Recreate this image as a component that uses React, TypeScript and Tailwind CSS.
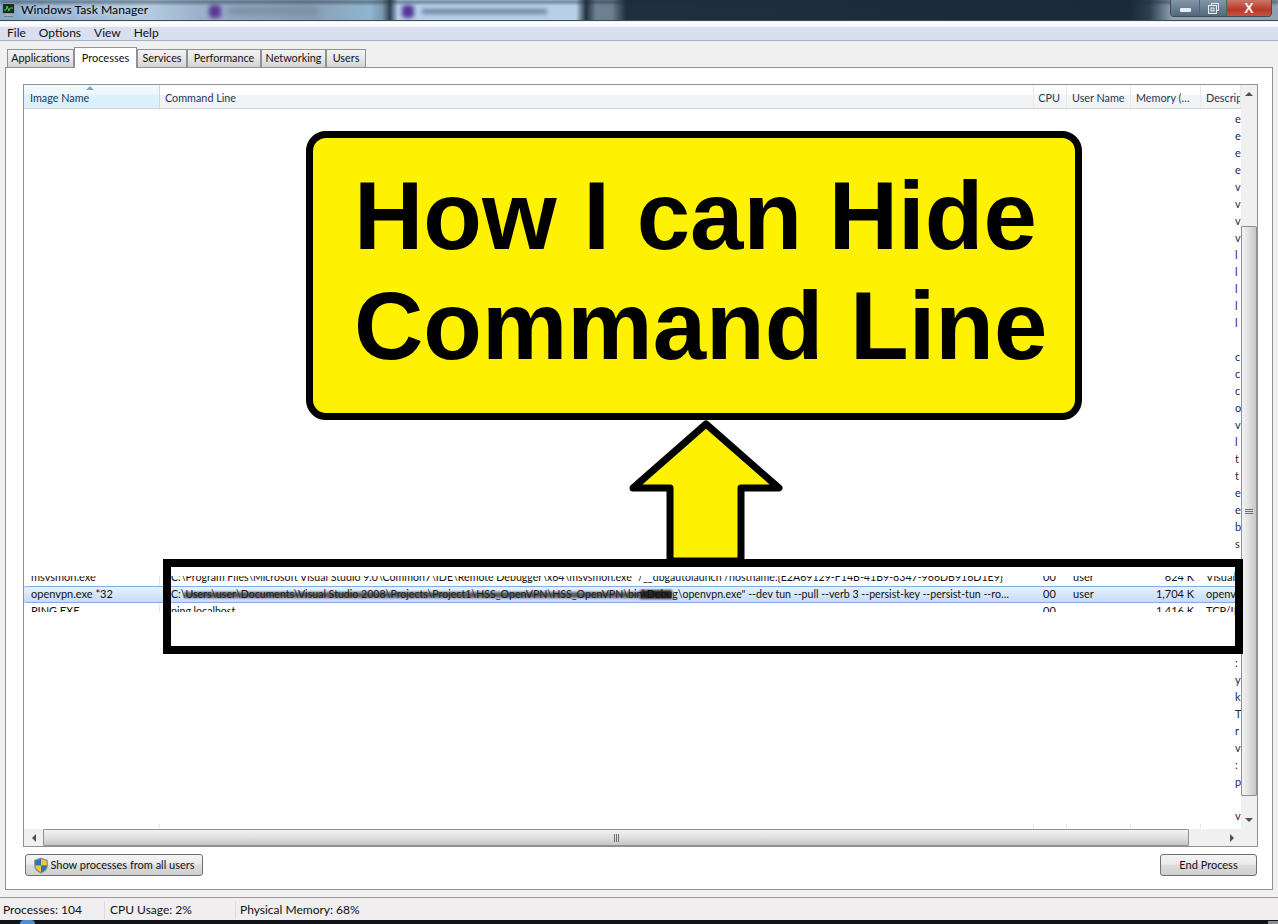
// Windows Task Manager screenshot with the yellow callout on top

const TABS = [
  { label: 'Applications', width: 'w-[67px]' },
  { label: 'Processes', width: 'w-[63px]' },
  { label: 'Services', width: 'w-[50px]' },
  { label: 'Performance', width: 'w-[74px]' },
  { label: 'Networking', width: 'w-[65px]' },
  { label: 'Users', width: 'w-[40px]' },
];

// first visible letter of the Description column, one per row
const DESC_LETTERS = [
  'e', 'e', 'e', 'e', 'v', 'v', 'v', 'v', 'l', 'l', 'l', 'l', 'l', '',
  'c', 'c', 'c', 'o', 'v', 'l', 't', 't', 'e', 'e', 'b', 's', 's',
];
const DESC_LETTERS_LOWER = ['', '', ':', 'y', 'k', 'T', 'r', 'v', ':', 'p', '', 'v'];

function WindowIcon() {
  return (
    <svg width="15" height="16" viewBox="0 0 15 16" className="shrink-0">
      <rect x="1.5" y="1.5" width="12" height="10" fill="#1c2b24" stroke="#8d99a3" />
      <path d="M3 8 L5 8 L6 4 L8 9 L9 6 L12 6" fill="none" stroke="#3fd25a" strokeWidth="1" />
      <rect x="5" y="12" width="5" height="2" fill="#aab4bb" />
      <rect x="3" y="14" width="9" height="1" fill="#6f7a83" />
    </svg>
  );
}

function Shield() {
  return (
    <svg width="16" height="17" viewBox="0 0 16 17" className="shrink-0">
      <path d="M8 0.8 L14.8 3 L14.8 8.5 C14.8 12.5 11.5 15 8 16.4 C4.5 15 1.2 12.5 1.2 8.5 L1.2 3 Z" fill="#7d8894" />
      <path d="M8 2 L8 8.5 L2.4 8.5 L2.4 3.8 Z" fill="#2f6fc4" />
      <path d="M8 2 L13.6 3.8 L13.6 8.5 L8 8.5 Z" fill="#f3c92c" />
      <path d="M2.4 8.5 L8 8.5 L8 15 C5 13.8 2.6 11.6 2.4 8.5 Z" fill="#f3c92c" />
      <path d="M8 8.5 L13.6 8.5 C13.4 11.6 11 13.8 8 15 Z" fill="#2f6fc4" />
    </svg>
  );
}

function Arrow({ dir }: { dir: 'up' | 'down' | 'left' | 'right' }) {
  const points = {
    up: '0,5 4,1 8,5',
    down: '0,1 8,1 4,5',
    left: '5,0 5,8 1,4',
    right: '1,0 1,8 5,4',
  }[dir];
  const horizontal = dir === 'left' || dir === 'right';
  return (
    <svg width={horizontal ? 6 : 8} height={horizontal ? 8 : 6} viewBox={horizontal ? '0 0 6 8' : '0 0 8 6'}>
      <polygon points={points} fill="#4d5157" />
    </svg>
  );
}

function TitleBar() {
  return (
    <div className="relative h-[21px] shrink-0 overflow-hidden border-b border-[#3c4a58] bg-[linear-gradient(90deg,#86a9c9_0px,#b3cbe0_150px,#9ab1ca_200px,#8a9fb7_310px,#8fb6cf_370px,#7c98ad_382px,#2f4256_390px,#b7d0ea_398px,#b7d0ea_576px,#22323f_586px,#6d8091_596px,#6d8091_612px,#1f2f3d_626px,#1b2a38_1130px,#2d4252_1150px,#8ea2b3_1172px)]">
      {/* blurred taskbar buttons behind the glass */}
      <div className="absolute left-[209px] top-[5px] h-[13px] w-[12px] rounded-sm bg-[#5b3a94] blur-[2px]" />
      <div className="absolute left-[228px] top-[8px] h-[6px] w-[90px] bg-[#76899f] blur-[3px]" />
      <div className="absolute left-[402px] top-[5px] h-[13px] w-[12px] rounded-sm bg-[#54369a] blur-[2px]" />
      <div className="absolute left-[422px] top-[9px] h-[5px] w-[125px] bg-[#6f86a0] blur-[2px]" />
      <div className="absolute inset-x-0 top-0 h-[4px] bg-[#1d2c3a]/40 blur-[1px]" />
      <div className="relative flex h-full items-center gap-[5px] pl-[1px]">
        <WindowIcon />
        <span className="text-[12.2px] text-black [text-shadow:0_0_6px_#ffffffcc]">Windows Task Manager</span>
      </div>
      <div className="absolute right-[6px] top-0 flex h-[17px] w-[102px] overflow-hidden rounded-b-[4px] border border-t-0 border-[#3c4c5a]">
        <div className="flex w-[29px] items-center justify-center border-r border-[#52626f] bg-[linear-gradient(180deg,#8296a7,#51687b)]">
          <div className="mt-[3px] h-[4px] w-[11px] rounded-[1px] bg-[#e6ecf0]" />
        </div>
        <div className="flex w-[27px] items-center justify-center border-r border-[#52626f] bg-[linear-gradient(180deg,#8296a7,#51687b)]">
          <svg width="11" height="11" viewBox="0 0 11 11">
            <rect x="3.5" y="0.5" width="7" height="7" fill="none" stroke="#dfe6ea" />
            <rect x="0.5" y="2.5" width="8" height="8" fill="#6b8092" stroke="#e9eef1" />
            <rect x="3" y="5" width="3" height="3" fill="none" stroke="#e9eef1" />
          </svg>
        </div>
        <div className="flex flex-1 items-center justify-center bg-[linear-gradient(180deg,#c9776b,#b8382a_60%,#c6533e)]">
          <span className="text-[14px] font-bold leading-none text-[#f2f2ee] font-['Liberation_Sans',sans-serif]">X</span>
        </div>
      </div>
    </div>
  );
}

function MenuBar() {
  return (
    <div className="mt-[1px] flex h-[19px] shrink-0 items-center gap-[13px] border-b border-[#a9b1c4] bg-[linear-gradient(180deg,#ffffff_0%,#f4f5fb_25%,#dbe0f0_30%,#d9dff0_100%)] pl-[7px] pt-[3px] text-[12px] text-[#111]">
      <span>File</span>
      <span>Options</span>
      <span>View</span>
      <span>Help</span>
    </div>
  );
}

function Tabs() {
  return (
    <div className="relative z-10 ml-[7px] flex h-[20px] shrink-0 items-end">
      {TABS.map((tab) =>
        tab.label === 'Processes' ? (
          <div
            key={tab.label}
            className={`${tab.width} -mb-[1px] flex h-[21px] items-start justify-center border border-b-0 border-[#8e9297] bg-white pt-[2px] text-[11px] text-[#111]`}
          >
            {tab.label}
          </div>
        ) : (
          <div
            key={tab.label}
            className={`${tab.width} flex h-[18px] items-center justify-center border border-b-0 border-[#8e9297] bg-[linear-gradient(180deg,#f3f3f3,#e6e6e6_50%,#d4d4d4)] text-[10.8px] text-[#111]`}
          >
            {tab.label}
          </div>
        ),
      )}
    </div>
  );
}

function HeaderCell({ width, label }: { width: string; label: string }) {
  return (
    <div className={`${width} flex h-full shrink-0 items-center overflow-hidden whitespace-nowrap border-r border-[#e4e9ef] pl-[5px] pt-[3px] text-[10.8px] text-[#1e395b]`}>
      {label}
    </div>
  );
}

function ListHeader() {
  return (
    <div className="flex h-[24px] shrink-0 border-b border-[#d5d5d5] bg-[linear-gradient(180deg,#ffffff_0%,#ffffff_40%,#f4f5f6_45%,#f2f3f4_100%)]">
      <div className="relative flex h-full w-[136px] shrink-0 items-center border-r border-[#b5e1f6] bg-[linear-gradient(180deg,#f2fafd_0%,#ecf8fd_40%,#def2fb_45%,#d9f0fb_100%)] pl-[6px] pt-[3px] text-[10.8px] text-[#1e395b]">
        Image Name
        <svg width="8" height="4" viewBox="0 0 8 4" className="absolute left-[62px] top-[1px]">
          <polygon points="0,4 4,0 8,4" fill="#7ca7c6" />
        </svg>
      </div>
      <HeaderCell width="w-[874px]" label="Command Line" />
      <div className="flex h-full w-[33px] shrink-0 items-center justify-end border-r border-[#e4e9ef] pr-[6px] pt-[3px] text-[10.8px] text-[#1e395b]">CPU</div>
      <HeaderCell width="w-[64px]" label="User Name" />
      <HeaderCell width="w-[70px]" label="Memory (…" />
      <HeaderCell width="w-[40px]" label="Descrip" />
    </div>
  );
}

// faint column separators that stick out above and below the painted area
function ColumnTicks({ height }: { height: string }) {
  return (
    <div className={`flex ${height} shrink-0`}>
      <div className="w-[136px] shrink-0 border-r border-[#dce8f5]" />
      <div className="w-[874px] shrink-0 border-r border-[#e8edf3]" />
      <div className="w-[33px] shrink-0 border-r border-[#dce8f5]" />
      <div className="w-[64px] shrink-0 border-r border-[#dce8f5]" />
      <div className="w-[70px] shrink-0 border-r border-[#dce8f5]" />
    </div>
  );
}

function DescRow({ letter }: { letter: string }) {
  return (
    <div className="flex h-[17px] shrink-0 justify-end">
      <div className="flex w-[6px] justify-start overflow-hidden text-[11px] leading-[17px] text-[#1b2a55]">{letter}</div>
    </div>
  );
}

function ProcessRow({
  name,
  command,
  cpu,
  user,
  memory,
  desc,
  selected,
}: {
  name: string;
  command: string;
  cpu: string;
  user: string;
  memory: string;
  desc: string;
  selected?: boolean;
}) {
  return (
    <div
      className={`flex h-[17px] shrink-0 items-center whitespace-nowrap text-[11px] text-[#111] ${
        selected ? 'rounded-[2px] border-y border-[#84acdd] bg-[linear-gradient(180deg,#e8f2fd,#c4dcf8)]' : ''
      }`}
    >
      <div className={`w-[136px] shrink-0 pl-[7px] ${selected ? '' : 'border-r border-[#dce8f5]'}`}>{name}</div>
      <div className="w-[874px] shrink-0 overflow-hidden pl-[11px] text-[10.6px]">{command}</div>
      <div className="w-[33px] shrink-0 pl-[9px]">{cpu}</div>
      <div className="w-[64px] shrink-0 pl-[6px]">{user}</div>
      <div className="w-[70px] shrink-0 pr-[7px] text-right">{memory}</div>
      <div className="w-[40px] shrink-0 overflow-hidden pl-[5px]">{desc}</div>
    </div>
  );
}

function ProcessList() {
  return (
    <div className="flex h-[763px] flex-col border border-[#8e9297] bg-white">
      <div className="flex min-h-0 flex-1">
        <div className="flex min-w-0 flex-1 flex-col overflow-hidden">
          <ListHeader />
          <div className="flex flex-col">
            <ColumnTicks height="h-[1px]" />
            {DESC_LETTERS.map((letter, i) => (
              <DescRow key={i} letter={letter} />
            ))}
            <ProcessRow
              name="msvsmon.exe"
              command={'C:\\Program Files\\Microsoft Visual Studio 9.0\\Common7\\IDE\\Remote Debugger\\x64\\msvsmon.exe" /__dbgautolaunch /hostname:{E2A69129-F14B-41B9-8347-966DB916D1E9}'}
              cpu="00"
              user="user"
              memory="624 K"
              desc="Visual"
            />
            <ProcessRow
              selected
              name="openvpn.exe *32"
              command={'C:\\Users\\user\\Documents\\Visual Studio 2008\\Projects\\Project1\\HSS_OpenVPN\\HSS_OpenVPN\\bin\\Debug\\openvpn.exe" --dev tun --pull --verb 3 --persist-key --persist-tun --ro…'}
              cpu="00"
              user="user"
              memory="1,704 K"
              desc="openv"
            />
            <ProcessRow name="PING.EXE" command="ping  localhost" cpu="00" user="" memory="1,416 K" desc="TCP/IP" />
            {DESC_LETTERS_LOWER.map((letter, i) => (
              <DescRow key={i} letter={letter} />
            ))}
            <ColumnTicks height="h-[4px]" />
          </div>
        </div>
        {/* vertical scrollbar */}
        <div className="flex w-[16px] shrink-0 flex-col bg-[#f0f0f0]">
          <div className="flex h-[17px] shrink-0 items-center justify-center">
            <Arrow dir="up" />
          </div>
          <div className="h-[124px] shrink-0" />
          <div className="flex h-[570px] shrink-0 items-center justify-center rounded-[1px] border border-[#8e9297] bg-[linear-gradient(90deg,#f3f3f3,#e2e2e2_45%,#c6c6c6)]">
            <div className="flex w-[8px] flex-col gap-[1px]">
              <div className="h-px bg-[#6d6d6d]" />
              <div className="h-px bg-[#6d6d6d]" />
              <div className="h-px bg-[#6d6d6d]" />
            </div>
          </div>
          <div className="flex flex-1 items-end justify-center pb-[6px]">
            <Arrow dir="down" />
          </div>
        </div>
      </div>
      {/* horizontal scrollbar */}
      <div className="flex h-[17px] shrink-0 bg-[#f0f0f0]">
        <div className="flex w-[19px] shrink-0 items-center justify-center">
          <Arrow dir="left" />
        </div>
        <div className="flex w-[1146px] shrink-0 items-center justify-center rounded-[1px] border border-[#8e9297] bg-[linear-gradient(180deg,#f3f3f3,#e2e2e2_45%,#c6c6c6)]">
          <div className="flex h-[8px] gap-[1px]">
            <div className="w-px bg-[#6d6d6d]" />
            <div className="w-px bg-[#6d6d6d]" />
            <div className="w-px bg-[#6d6d6d]" />
          </div>
        </div>
        <div className="flex flex-1 items-center justify-end pr-[22px]">
          <Arrow dir="right" />
        </div>
      </div>
    </div>
  );
}

function Button({ children, width }: { children: React.ReactNode; width: string }) {
  return (
    <div className={`${width} flex h-[22px] items-center justify-center gap-[1px] rounded-[3px] border border-[#707070] bg-[linear-gradient(180deg,#f3f3f3,#ebebeb_45%,#dcdcdc_50%,#cfcfcf)] text-[11px] text-[#111]`}>
      {children}
    </div>
  );
}

function Callout() {
  return (
    <>
      <div className="absolute left-[306px] top-[131px] h-[289px] w-[776px] rounded-[20px] border-[7px] border-black bg-[#fff200] pl-[41px] pt-[23px] font-['Liberation_Sans',sans-serif] text-[96px] font-bold leading-[110px] text-black">
        <div>How I can Hide</div>
        <div>Command Line</div>
      </div>
      <svg width="170" height="150" viewBox="0 0 170 150" className="absolute left-[621px] top-[415px]">
        <path
          d="M85 9 L158 73 L120 73 L120 146 L49 146 L49 73 L12 73 Z"
          fill="#fff200"
          stroke="#000"
          strokeWidth="7"
          strokeLinejoin="round"
        />
      </svg>
    </>
  );
}

export default function App() {
  return (
    <div className="relative flex h-[924px] w-[1278px] flex-col overflow-hidden bg-[#f0f0f0] font-['Lato',sans-serif]">
      <TitleBar />
      <MenuBar />
      <div className="mt-[6px] flex min-h-0 flex-1 flex-col">
        <Tabs />
        <div className="ml-[5px] mr-[5px] h-[823px] shrink-0 border border-[#8e9297] bg-white pl-[17px] pr-[14px] pt-[16px]">
          <ProcessList />
          <div className="mt-[7px] flex justify-between pl-[2px] pr-[1px]">
            <Button width="w-[178px]">
              <Shield />
              Show processes from all users
            </Button>
            <Button width="w-[97px]">End Process</Button>
          </div>
        </div>
      </div>

      {/* status bar */}
      <div className="flex h-[23px] shrink-0 items-center border-t border-[#9a9a9a] bg-[#f0eeee] pt-[1px] text-[12px] text-[#111]">
        <div className="w-[105px] border-r border-[#dcdada] pl-[3px]">Processes: 104</div>
        <div className="w-[131px] border-r border-[#dcdada] pl-[5px]">CPU Usage: 2%</div>
        <div className="pl-[4px]">Physical Memory: 68%</div>
      </div>
      <div className="relative h-[4px] shrink-0 bg-[#101418]">
        <div className="absolute left-[20px] top-0 h-[4px] w-[15px] rounded-t-full bg-[#4d8fd0]" />
        <div className="absolute right-0 top-[1px] h-[3px] w-[10px] bg-[#8b8f93]" />
      </div>

      {/* white paint over the list, everything but the boxed rows */}
      <div className="absolute left-[24px] top-[113px] h-[463px] w-[1210px] bg-white" />
      <div className="absolute left-[24px] top-[612px] h-[211px] w-[1210px] bg-white" />

      {/* scribble over the path */}
      <div className="absolute left-[184px] top-[592px] h-[6px] w-[456px] bg-[#222]/70 blur-[1px]" />
      <div className="absolute left-[640px] top-[590px] h-[9px] w-[32px] bg-[#111]/90 blur-[1px]" />

      <div className="absolute left-[163px] top-[559px] h-[95px] w-[1080px] border-[8px] border-black" />
      <Callout />
    </div>
  );
}
